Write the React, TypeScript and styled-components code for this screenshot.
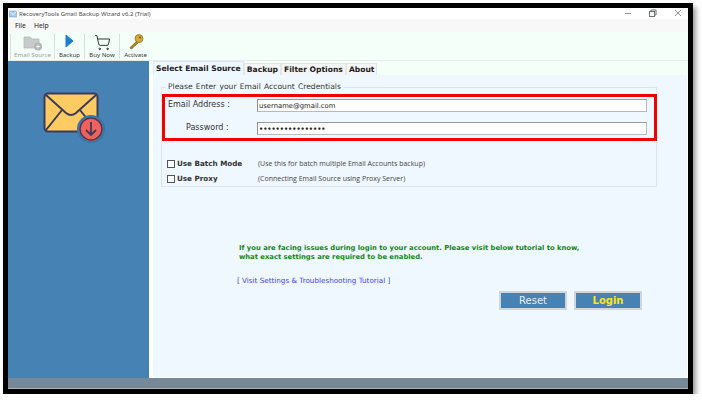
import React from 'react';
import styled, {createGlobalStyle} from "styled-components";
import {ShoppingCart} from "lucide-react";

const GlobalStyle = createGlobalStyle`
    html, body {
        margin: 0;
        padding: 0;
        background: #ffffff;
    }
    * {
        box-sizing: border-box;
    }
`

const EnvelopeIcon = () => (
   <svg width="62" height="52" viewBox="0 0 62 52">
      <rect x="1.5" y="1.5" width="53" height="38" rx="3.5" fill="#fdcb62" stroke="#3f3a5a" strokeWidth="2"/>
      <path d="M3 3 L23 21 Q28 25 33 21 L53 3" fill="none" stroke="#3f3a5a" strokeWidth="2"/>
      <path d="M3 38 L19 18 M53 38 L37 18" fill="none" stroke="#3f3a5a" strokeWidth="2"/>
      <circle cx="48" cy="37" r="13" fill="#f0605c" stroke="#2f79ab" strokeWidth="2"/>
      <circle cx="48" cy="37" r="11" fill="#f0605c" stroke="#3f3a5a" strokeWidth="1.5"/>
      <path d="M48 30 V43 M43 38 L48 43 L53 38" fill="none" stroke="#3f3a5a" strokeWidth="1.8"/>
   </svg>
)

const SourceIcon = () => (
   <svg width="20" height="17" viewBox="0 0 20 17">
      <path d="M1 3 H7 L9 5 H16 V14 H1 Z" fill="#c8cbc9" stroke="#b4b7b5" strokeWidth="0.8"/>
      <circle cx="15" cy="12.5" r="4" fill="#b3b6b4"/>
      <path d="M13 12.5 H17 M15 10.5 V14.5" stroke="#eef2ef" strokeWidth="1"/>
   </svg>
)

const PlayIcon = () => (
   <svg width="9" height="14" viewBox="0 0 9 14">
      <path d="M1 1 L8 7 L1 13 Z" fill="#1c7fd0" stroke="#1c7fd0"/>
   </svg>
)

const KeyIcon = () => (
   <svg width="16" height="16" viewBox="0 0 16 16">
      <path d="M9 7 L2 13.5 L3 15 L5 14 L5.5 12.5 L7 12 L10 9" fill="#a98424" stroke="#8a6b1c" strokeWidth="0.7"/>
      <circle cx="11" cy="4.6" r="4" fill="#d5a93a" stroke="#94721e" strokeWidth="0.8"/>
      <circle cx="12" cy="3.6" r="1" fill="#6d5415"/>
   </svg>
)

const TitleLogo = () => (
   <svg width="8" height="8" viewBox="0 0 8 8">
      <rect x="0.5" y="1" width="7" height="6" fill="#a9cbe8" stroke="#6ea3cf" strokeWidth="0.6"/>
      <path d="M0.5 1.5 L4 4.5 L7.5 1.5" fill="none" stroke="#ffffff" strokeWidth="0.7"/>
   </svg>
)

const WindowControls = () => (
   <svg width="58" height="9" viewBox="0 0 58 9">
      <path d="M0 4.5 H6" stroke="#8a8f94" strokeWidth="1"/>
      <rect x="24.5" y="2.5" width="5" height="5" fill="none" stroke="#6d7276"/>
      <path d="M26 2.5 V1 H31 V6 H29.5" fill="none" stroke="#6d7276"/>
      <path d="M50 1 L56 7 M56 1 L50 7" stroke="#7d8286" strokeWidth="0.9"/>
   </svg>
)

export default function App() {
   return (
      <>
         <GlobalStyle/>
         <Frame>
            <TitleBar>
               <TitleLogo/>
               <TitleText>RecoveryTools Gmail Backup Wizard v6.2 (Trial)</TitleText>
               <WindowControls/>
            </TitleBar>
            <MenuBar>
               <MenuItem>File</MenuItem>
               <MenuItem>Help</MenuItem>
            </MenuBar>
            <Toolbar>
               <ToolButton $width={45} $muted>
                  <SourceIcon/>
                  <ToolLabel>Email Source</ToolLabel>
               </ToolButton>
               <ToolButton $width={30}>
                  <PlayIcon/>
                  <ToolLabel>Backup</ToolLabel>
               </ToolButton>
               <ToolButton $width={35}>
                  <ShoppingCart size={17} strokeWidth={1.4} color="#333333"/>
                  <ToolLabel>Buy Now</ToolLabel>
               </ToolButton>
               <ToolButton $width={31} $last>
                  <KeyIcon/>
                  <ToolLabel>Activate</ToolLabel>
               </ToolButton>
            </Toolbar>
            <Body>
               <Sidebar>
                  <EnvelopeIcon/>
               </Sidebar>
               <Main>
                  <Tabs>
                     <Tab $active>Select Email Source</Tab>
                     <Tab>Backup</Tab>
                     <Tab>Filter Options</Tab>
                     <Tab>About</Tab>
                  </Tabs>
                  <Panel>
                     <Group>
                        <GroupTitle>Please Enter your Email Account Credentials</GroupTitle>
                        <Credentials>
                           <CredentialRow>
                              <FieldLabel>Email Address :</FieldLabel>
                              <Field readOnly value="username@gmail.com"/>
                           </CredentialRow>
                           <CredentialRow>
                              <FieldLabel $indented>Password :</FieldLabel>
                              <Field readOnly $secret value="••••••••••••••••"/>
                           </CredentialRow>
                        </Credentials>
                        <OptionList>
                           <OptionRow>
                              <Check/>
                              <OptionName>Use Batch Mode</OptionName>
                              <OptionNote>(Use this for batch multiple Email Accounts backup)</OptionNote>
                           </OptionRow>
                           <OptionRow>
                              <Check/>
                              <OptionName>Use Proxy</OptionName>
                              <OptionNote>(Connecting Email Source using Proxy Server)</OptionNote>
                           </OptionRow>
                        </OptionList>
                     </Group>
                     <Notice>
                        If you are facing issues during login to your account. Please visit below tutorial to know,<br/>
                        what exact settings are required to be enabled.
                     </Notice>
                     <TutorialLink>[ Visit Settings &amp; Troubleshooting Tutorial ]</TutorialLink>
                     <Actions>
                        <ActionButton>Reset</ActionButton>
                        <ActionButton $primary>Login</ActionButton>
                     </Actions>
                  </Panel>
               </Main>
            </Body>
            <StatusBar/>
         </Frame>
      </>
   );
}

const Frame = styled.div`
    width: 690px;
    height: 391px;
    margin: 3px 0 0 3px;
    border: 5px solid #000000;
    background: #ffffff;
    display: flex;
    flex-direction: column;
    box-shadow: 3px 4px 5px rgba(0, 0, 0, 0.4);
    overflow: hidden;
`
const TitleBar = styled.div`
    height: 11px;
    flex: none;
    display: flex;
    align-items: center;
    gap: 2px;
    padding: 0 5px 0 1px;
    background: #ffffff;
`
const TitleText = styled.span`
    flex: 1;
    font: 6px "Noto Sans", sans-serif;
    color: #4a4a4a;
    white-space: nowrap;
`
const MenuBar = styled.div`
    height: 13px;
    flex: none;
    display: flex;
    align-items: center;
    gap: 8px;
    padding-left: 7px;
    background: #f8f8f8;
`
const MenuItem = styled.span`
    font: 6.8px "Noto Sans", sans-serif;
    color: #222222;
`
const Toolbar = styled.div`
    height: 29px;
    flex: none;
    display: flex;
    align-items: stretch;
    padding: 2px 0 1px 2px;
    background: #f5fffa;
    border-bottom: 1px solid #e6ece8;
`
const ToolButton = styled.div<{$width: number; $muted?: boolean; $last?: boolean}>`
    width: ${props => props.$width}px;
    display: flex;
    flex-direction: column;
    align-items: center;
    justify-content: space-between;
    color: ${props => props.$muted ? "#9a9d9b" : "#333333"};
    border-right: ${props => props.$last ? "none" : "1px solid #d9dfdb"};

    &:first-child {
        border-left: 1px solid #d9dfdb;
    }
`
const ToolLabel = styled.span`
    font: 6.1px "Noto Sans", sans-serif;
    white-space: nowrap;
    line-height: 8px;
`
const Body = styled.div`
    flex: 1;
    display: flex;
    min-height: 0;
`
const Sidebar = styled.aside`
    width: 141px;
    flex: none;
    padding: 31px 0 0 35px;
    background: #4682b4;
`
const Main = styled.main`
    flex: 1;
    display: flex;
    flex-direction: column;
    padding: 0 1px 1px 4px;
    background: #ffffff;
`
const Tabs = styled.div`
    height: 14px;
    flex: none;
    margin: 0 -1px 0 -4px;
    padding-left: 4px;
    display: flex;
    align-items: flex-end;
    background: #f5fffa;
`
const Tab = styled.div<{$active?: boolean}>`
    height: ${props => props.$active ? "14px" : "12px"};
    padding: 0 2px;
    display: flex;
    align-items: center;
    font: bold 7.6px "DejaVu Sans", sans-serif;
    color: #222222;
    background: ${props => props.$active ? "#f0f8ff" : "#f5f5f5"};
    border: 1px solid #e2e6ea;
    border-bottom: none;
    white-space: nowrap;
`
const Panel = styled.section`
    flex: 1;
    display: flex;
    flex-direction: column;
    padding: 7px 30px 0 8px;
    background: #f0f8ff;
`
const Group = styled.fieldset`
    height: 105px;
    flex: none;
    margin: 0;
    padding: 0;
    border: 1px solid #dde4ea;
    min-width: 0;
`
const GroupTitle = styled.legend`
    margin-left: 4px;
    padding: 0 2px;
    font: 7.6px "DejaVu Sans", sans-serif;
    word-spacing: 0.8px;
    color: #333333;
    line-height: 10px;
`
const Credentials = styled.div`
    height: 47px;
    margin: 2px -1px 0 0;
    padding: 2px 7px 0 3px;
    display: flex;
    flex-direction: column;
    gap: 10px;
    border: 3px solid #f00000;
`
const CredentialRow = styled.div`
    display: flex;
    align-items: center;
    justify-content: space-between;
`
const FieldLabel = styled.span<{$indented?: boolean}>`
    padding-left: ${props => props.$indented ? "18px" : "0"};
    font: 8px "DejaVu Sans", sans-serif;
    color: #333333;
    position: relative;
    top: -1px;
`
const Field = styled.input<{$secret?: boolean}>`
    width: 390px;
    height: 13px;
    padding: 0 1px;
    font: ${props => props.$secret ? "bold 6.5px" : "6.8px"} "DejaVu Sans", sans-serif;
    color: #222222;
    background: #ffffff;
    border: 1px solid #b7b9ba;
    border-left-color: #8d8f90;
    border-top-color: #9a9c9d;
    outline: none;
`
const OptionList = styled.div`
    margin-top: 18px;
    padding-left: 5px;
    display: flex;
    flex-direction: column;
    gap: 6px;
`
const OptionRow = styled.div`
    height: 9px;
    display: flex;
    align-items: center;
`
const Check = styled.span`
    width: 8px;
    height: 8px;
    flex: none;
    background: #ffffff;
    border: 1px solid #555555;
`
const OptionName = styled.span`
    width: 83px;
    padding-left: 2px;
    font: bold 7.2px "DejaVu Sans", sans-serif;
    color: #333333;
    white-space: nowrap;
`
const OptionNote = styled.span`
    font: 7px "Open Sans", sans-serif;
    color: #444444;
    white-space: nowrap;
`
const Notice = styled.p`
    margin: 57px 0 0 78px;
    font: bold 6.8px/8.7px "DejaVu Sans", sans-serif;
    color: #118a11;
    white-space: nowrap;
`
const TutorialLink = styled.a`
    margin: 15px 0 0 76px;
    font: 7.2px "DejaVu Sans", sans-serif;
    color: #4444ee;
    white-space: nowrap;
`
const Actions = styled.div`
    margin: 6px 15px 0 0;
    display: flex;
    justify-content: flex-end;
    gap: 7px;
`
const ActionButton = styled.button<{$primary?: boolean}>`
    width: 68px;
    height: 19px;
    padding: 0;
    font: ${props => props.$primary ? "bold 10px" : "10px"} "DejaVu Sans", sans-serif;
    color: ${props => props.$primary ? "#ffe21a" : "#e8eef4"};
    background: #4682b4;
    border: 2px solid #d3d6d8;
`
const StatusBar = styled.footer`
    height: 11px;
    flex: none;
    background: #778899;
    border-bottom: 1px solid #a9b4be;
`
